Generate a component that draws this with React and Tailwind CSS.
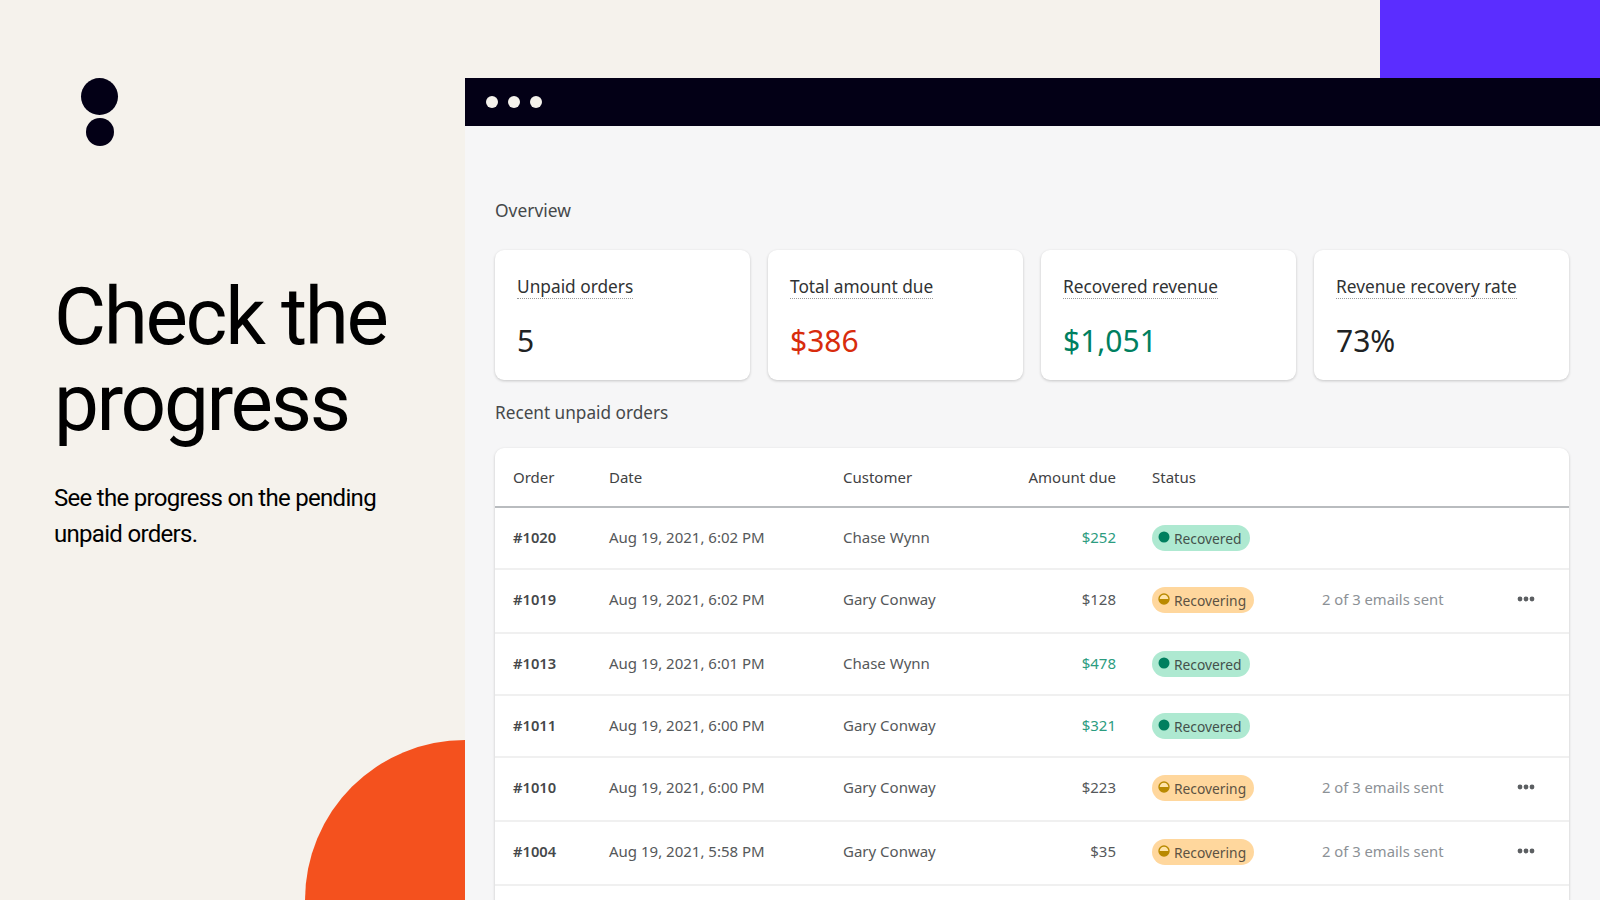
const stats = [
  { label: "Unpaid orders", value: "5", color: "text-[#202223]" },
  { label: "Total amount due", value: "$386", color: "text-[#d82c0d]" },
  { label: "Recovered revenue", value: "$1,051", color: "text-[#007f5f]" },
  { label: "Revenue recovery rate", value: "73%", color: "text-[#202223]" },
];

const orders = [
  { id: "#1020", date: "Aug 19, 2021, 6:02 PM", customer: "Chase Wynn", amount: "$252", done: true },
  { id: "#1019", date: "Aug 19, 2021, 6:02 PM", customer: "Gary Conway", amount: "$128", done: false },
  { id: "#1013", date: "Aug 19, 2021, 6:01 PM", customer: "Chase Wynn", amount: "$478", done: true },
  { id: "#1011", date: "Aug 19, 2021, 6:00 PM", customer: "Gary Conway", amount: "$321", done: true },
  { id: "#1010", date: "Aug 19, 2021, 6:00 PM", customer: "Gary Conway", amount: "$223", done: false },
  { id: "#1004", date: "Aug 19, 2021, 5:58 PM", customer: "Gary Conway", amount: "$35", done: false },
];

const columns = "grid grid-cols-[114px_234px_180px_93px_206px_170px_1fr] items-center";

function Logo() {
  return (
    <div className="flex w-[37px] flex-col items-center gap-[3px]">
      <div className="h-[37px] w-[37px] rounded-full bg-[#030016]" />
      <div className="h-[28px] w-[28px] rounded-full bg-[#030016]" />
    </div>
  );
}

function StatCard({ label, value, color }) {
  return (
    <div className="h-[130px] rounded-[9px] bg-white pl-[22px] pt-[25px] shadow-[0_1px_3px_rgba(0,0,0,0.2)]">
      <span className="inline-block border-b border-dotted border-[#9a9a9a] text-[17.3px] leading-[23px] text-[#303233]">
        {label}
      </span>
      <div className={`mt-[22px] text-[30px] leading-[40px] ${color}`}>{value}</div>
    </div>
  );
}

function Badge({ done }) {
  if (done) {
    return (
      <span className="inline-flex h-[26px] w-[98px] items-center rounded-full bg-[#aee9d1] pl-[6px] text-[13.8px] text-[#44514c]">
        <svg width="12" height="12" viewBox="0 0 12 12" className="mr-[4px] mb-[2px]">
          <circle cx="6" cy="6" r="5.5" fill="#007f5f" />
        </svg>
        <span className="mt-[2px]">Recovered</span>
      </span>
    );
  }
  return (
    <span className="inline-flex h-[26px] w-[102px] items-center rounded-full bg-[#ffd79d] pl-[6px] text-[13.8px] text-[#5c5243]">
      <svg width="12" height="12" viewBox="0 0 12 12" className="mr-[4px] mb-[2px]">
        <circle cx="6" cy="6" r="5" fill="#ffe3a8" stroke="#b98900" strokeWidth="1.4" />
        <path d="M1 6h10a5 5 0 0 1-10 0z" fill="#b98900" />
      </svg>
      <span className="mt-[2px]">Recovering</span>
    </span>
  );
}

function Row({ order }) {
  return (
    <div
      className={`${columns} border-b-2 border-[#f0f0f0] text-[15px] text-[#55585a] ${
        order.done ? "h-[62px] pb-[2px]" : "h-[64px] pb-[4px]"
      }`}
    >
      <div className="pl-[18px] text-[14.7px] font-semibold text-[#45484a]">{order.id}</div>
      <div>{order.date}</div>
      <div>{order.customer}</div>
      <div className={`text-right ${order.done ? "text-[#2c9c7f]" : ""}`}>{order.amount}</div>
      <div className="mt-[2px] pl-[36px]">
        <Badge done={order.done} />
      </div>
      {!order.done && <div className="text-[14.8px] text-[#8c9196]">2 of 3 emails sent</div>}
      {!order.done && (
        <div className="pl-[25px]">
          <svg width="18" height="6" viewBox="0 0 18 6" fill="#5c5f62">
            <circle cx="3" cy="3" r="2.4" />
            <circle cx="9" cy="3" r="2.4" />
            <circle cx="15" cy="3" r="2.4" />
          </svg>
        </div>
      )}
    </div>
  );
}

export default function App() {
  return (
    <div className="flex h-[900px] w-full overflow-hidden bg-[#f5f2ec] font-['Noto_Sans',sans-serif]">
      <aside className="relative w-[465px] shrink-0 pt-[78px] font-['Roboto',sans-serif]">
        <div className="pl-[81px]">
          <Logo />
        </div>
        <h1 className="ml-[54px] mt-[128px] text-[80px] font-normal leading-[86px] tracking-[-0.029em] text-black">
          Check the progress
        </h1>
        <p className="ml-[54px] mt-[34px] w-[350px] text-[24px] font-normal leading-[36px] tracking-[-0.029em] text-black">
          See the progress on the pending unpaid orders.
        </p>
        <div className="absolute bottom-0 right-0 h-[160px] w-[160px] rounded-tl-full bg-[#f4511e]" />
      </aside>

      <main className="flex min-w-0 flex-1 flex-col">
        <div className="flex h-[78px] justify-end">
          <div className="w-[220px] bg-[#5b2dff]" />
        </div>
        <div className="flex h-[48px] items-center gap-[10px] bg-[#030016] pl-[21px]">
          <span className="h-[12px] w-[12px] rounded-full bg-[#f5f2ec]" />
          <span className="h-[12px] w-[12px] rounded-full bg-[#f5f2ec]" />
          <span className="h-[12px] w-[12px] rounded-full bg-[#f5f2ec]" />
        </div>
        <div className="flex-1 overflow-hidden bg-[#f6f6f7] pl-[30px] pr-[31px] pt-[72px]">
          <h2 className="text-[17.4px] leading-[24px] text-[#45484a]">Overview</h2>
          <div className="mt-[28px] grid grid-cols-4 gap-[18px]">
            {stats.map((s) => (
              <StatCard key={s.label} {...s} />
            ))}
          </div>
          <h2 className="mt-[21px] text-[17.2px] leading-[24px] text-[#45484a]">Recent unpaid orders</h2>
          <div className="mt-[23px] rounded-t-[9px] bg-white shadow-[0_1px_3px_rgba(0,0,0,0.2)]">
            <div className={`${columns} h-[60px] border-b-2 border-[#b9bcbf] pt-[1px] text-[15px] text-[#3f4244]`}>
              <div className="pl-[18px]">Order</div>
              <div>Date</div>
              <div>Customer</div>
              <div className="whitespace-nowrap text-right">Amount due</div>
              <div className="pl-[36px]">Status</div>
            </div>
            {orders.map((o) => (
              <Row key={o.id} order={o} />
            ))}
            <div className="h-[40px]" />
          </div>
        </div>
      </main>
    </div>
  );
}
